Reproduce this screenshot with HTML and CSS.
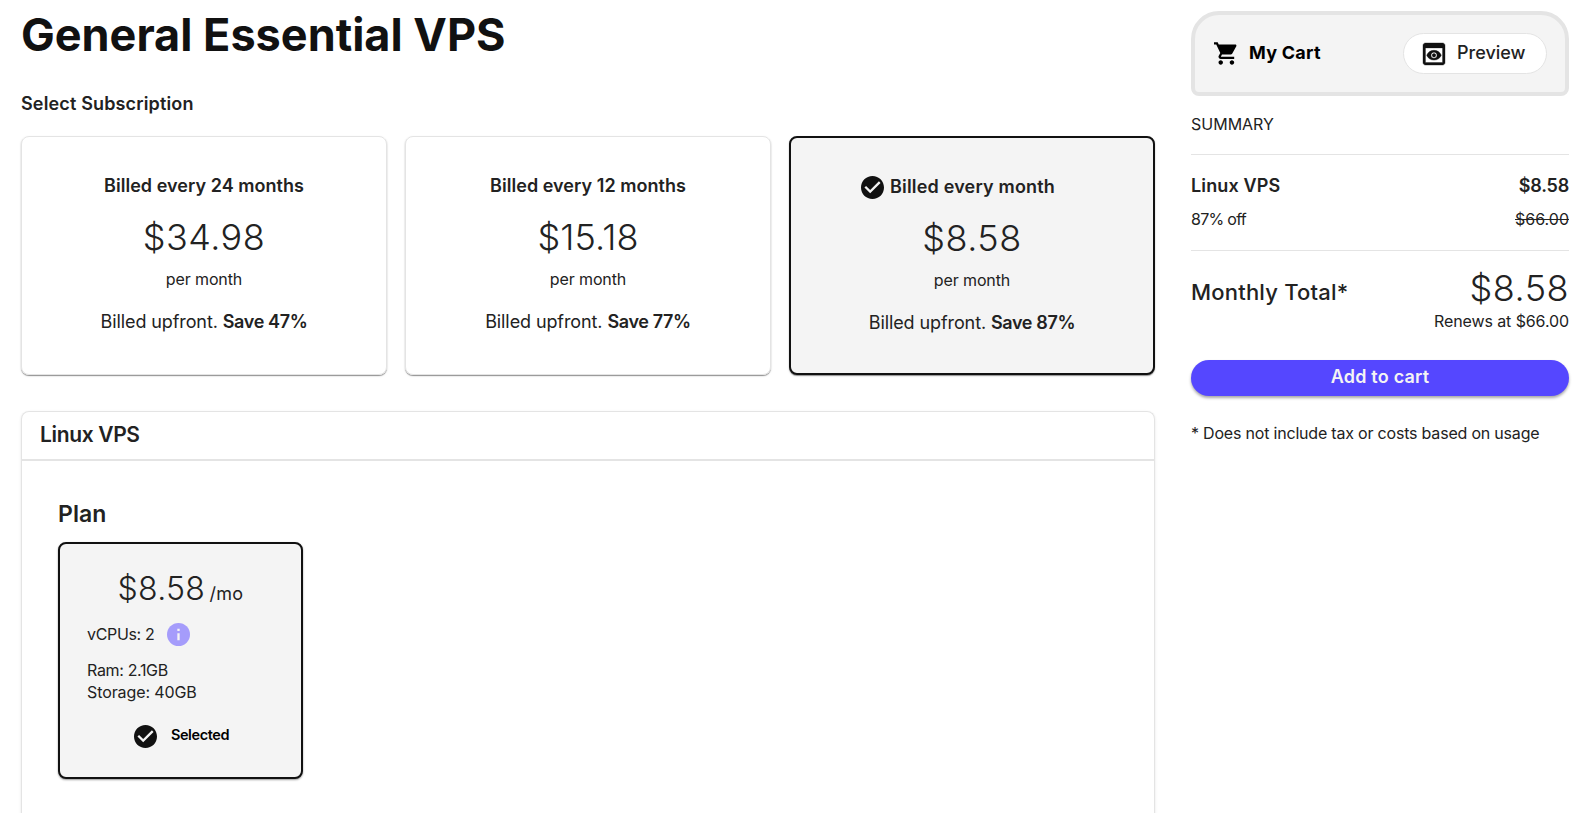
FILE: index.html
```
<!DOCTYPE html>
<html lang="en">
<head>
  <meta charset="UTF-8">
  <title>General Essential VPS</title>
  <link rel="stylesheet" href="styles.css">
</head>
<body>

<div class="page">
  <main class="main">
    <h1>General Essential VPS</h1>
    <h2 class="subtitle">Select Subscription</h2>

    <div class="cards">
      <div class="card">
        <div class="card-title">Billed every 24 months</div>
        <div class="price">$34.98</div>
        <div class="per">per month</div>
        <div class="upfront">Billed upfront. <b>Save 47%</b></div>
      </div>
      <div class="card">
        <div class="card-title">Billed every 12 months</div>
        <div class="price narrow">$15.18</div>
        <div class="per">per month</div>
        <div class="upfront">Billed upfront. <b>Save 77%</b></div>
      </div>
      <div class="card selected">
        <div class="card-title with-icon">
          <svg class="check" viewBox="2 2 20 20"><path fill="#111" d="M12 2C6.48 2 2 6.48 2 12s4.48 10 10 10 10-4.48 10-10S17.52 2 12 2zm-2 15l-5-5 1.41-1.41L10 14.17l7.59-7.59L19 8l-9 9z"/></svg>
          <span>Billed every month</span>
        </div>
        <div class="price">$8.58</div>
        <div class="per">per month</div>
        <div class="upfront">Billed upfront. <b>Save 87%</b></div>
      </div>
    </div>

    <section class="panel">
      <div class="panel-header">Linux VPS</div>
      <div class="panel-body">
        <h3>Plan</h3>
        <div class="plan selected">
          <div class="plan-price">$8.58 <span>/mo</span></div>
          <div class="cpu">
            <span>vCPUs: 2</span>
            <svg class="info" viewBox="2 2 20 20"><circle cx="12" cy="12" r="10" fill="#a59cfb"/><path fill="#f4f4f4" d="M11 7h2v2h-2zM11 11h2v6h-2z"/></svg>
          </div>
          <div class="spec">Ram: 2.1GB</div>
          <div class="spec storage">Storage: 40GB</div>
          <div class="chosen">
            <svg class="check" viewBox="2 2 20 20"><path fill="#111" d="M12 2C6.48 2 2 6.48 2 12s4.48 10 10 10 10-4.48 10-10S17.52 2 12 2zm-2 15l-5-5 1.41-1.41L10 14.17l7.59-7.59L19 8l-9 9z"/></svg>
            <span>Selected</span>
          </div>
        </div>
      </div>
    </section>
  </main>

  <aside class="side">
    <div class="cart">
      <svg class="cart-icon" viewBox="1 2 20.5 20"><path d="M7 18c-1.1 0-1.99.9-1.99 2S5.9 22 7 22s2-.9 2-2-.9-2-2-2zM1 2v2h2l3.6 7.59-1.35 2.45c-.16.28-.25.61-.25.96 0 1.1.9 2 2 2h12v-2H7.42c-.14 0-.25-.11-.25-.25l.03-.12.9-1.63h7.45c.75 0 1.41-.41 1.75-1.03l3.58-6.49c.08-.14.12-.31.12-.48 0-.55-.45-1-1-1H5.21l-.94-2H1zm16 16c-1.1 0-1.99.9-1.99 2s.89 2 1.99 2 2-.9 2-2-.9-2-2-2z"/></svg>
      <span class="cart-title">My Cart</span>
      <button class="preview">
        <svg class="preview-icon" viewBox="3 3 18 18"><path fill="#111" stroke="#111" stroke-width=".3" d="M19 3H5c-1.11 0-2 .9-2 2v14c0 1.1.89 2 2 2h14c1.1 0 2-.9 2-2V5c0-1.1-.9-2-2-2zm0 16H5V7h14v12zm-5.500-6c0 .83-.67 1.500-1.500 1.500s-1.500-.67-1.500-1.500.67-1.500 1.500-1.500 1.500.67 1.500 1.500zM12 9c-2.730 0-5.060 1.660-6 4 .94 2.340 3.270 4 6 4s5.060-1.660 6-4c-.94-2.340-3.270-4-6-4zm0 6.500c-1.380 0-2.500-1.120-2.500-2.500s1.120-2.500 2.500-2.500 2.500 1.120 2.500 2.500-1.120 2.500-2.500 2.500z"/></svg>
        <span>Preview</span>
      </button>
    </div>

    <div class="summary">SUMMARY</div>
    <div class="item">
      <div class="row strong"><span>Linux VPS</span><span class="amount">$8.58</span></div>
      <div class="row off"><span class="discount">87% off</span><s>$66.00</s></div>
    </div>
    <div class="total">
      <span class="total-label">Monthly Total*</span>
      <span class="price">$8.58</span>
    </div>
    <div class="renews">Renews at $66.00</div>
    <button class="add">Add to cart</button>
    <div class="note">* Does not include tax or costs based on usage</div>
  </aside>
</div>

</body>
</html>
```
FILE: styles.css
```
* { box-sizing: border-box; }
html, body { height: 100%; overflow: hidden; }
body { margin: 0; background: #fff; color: #222; font-family: Inter, "Liberation Sans", sans-serif; font-size: 16px; }
h1, h2, h3 { margin: 0; }
button { font-family: inherit; cursor: pointer; }
svg { flex: none; display: block; }

.page { display: flex; gap: 36px; padding: 8px 22px 0 21px; }
.main { width: 1134px; }
.side { width: 378px; padding-top: 3px; }

h1 { font-size: 45px; line-height: 54px; font-weight: 650; letter-spacing: 0; color: #111; }
.subtitle { margin-top: 30px; font-size: 18px; line-height: 24px; font-weight: 600; letter-spacing: 0.15px; }

/* billing cards */
.cards { display: grid; grid-template-columns: repeat(3, 366px); gap: 18px; margin-top: 20px; height: 239px; }
.card { padding-top: 37px; border: 1px solid #e4e4e4; border-radius: 8px; text-align: center; box-shadow: 0 1px 1px rgba(0,0,0,.4), 0 1px 3px rgba(0,0,0,.08); }
.selected { background: #f4f4f4; border: 2px solid #111; }
.card-title { display: flex; justify-content: center; height: 24px; font-size: 18px; line-height: 24px; font-weight: 600; letter-spacing: 0.04px; }
.with-icon { padding-right: 28px; letter-spacing: 0.19px; }
.check { width: 23px; height: 23px; margin: 1px 6px 0 0; }
.price { margin-top: 17px; font-size: 36px; line-height: 44px; font-weight: 300; letter-spacing: 0.5px; }
.narrow { letter-spacing: 0.1px; }
.per { margin-top: 10px; line-height: 20px; letter-spacing: -0.12px; }
.upfront { margin-top: 21px; font-size: 18px; line-height: 24px; letter-spacing: -0.1px; }
.upfront b { font-weight: 600; letter-spacing: -0.36px; }

/* product panel */
.panel { min-height: 402px; margin-top: 36px; border: 1px solid #e4e4e4; border-bottom: 0; border-radius: 8px 8px 0 0; box-shadow: 0 1px 3px rgba(0,0,0,.1); }
.panel-header { height: 49px; padding: 10px 0 0 18px; border-bottom: 2px solid #e4e4e4; font-size: 21px; line-height: 26px; font-weight: 600; letter-spacing: -0.35px; }
.panel-body { padding: 39px 36px; }
h3 { font-size: 23px; line-height: 28px; font-weight: 600; letter-spacing: 0.1px; }
.plan { width: 245px; height: 237px; margin-top: 14px; padding: 25px 27px 0; border-radius: 8px; box-shadow: 0 1px 2px rgba(0,0,0,.4); }
.plan-price { height: 40px; text-align: center; font-size: 32px; line-height: 40px; font-weight: 300; letter-spacing: 0.3px; word-spacing: -5px; }
.plan-price span { font-size: 18px; font-weight: 400; }
.cpu { display: flex; gap: 13px; margin: 14px 0 13px; height: 23px; line-height: 23px; letter-spacing: -0.34px; }
.info { width: 23px; height: 23px; }
.spec { line-height: 22px; letter-spacing: -0.34px; }
.storage { letter-spacing: -0.1px; }
.chosen { display: flex; justify-content: center; gap: 8px; margin: 21px 0 0 2px; color: #000; font-size: 14.5px; line-height: 22px; font-weight: 600; letter-spacing: -0.4px; }

/* cart */
.cart { display: flex; align-items: center; height: 85px; padding: 0 18px 0 19px; background: #f4f4f4; border: 4px solid #e4e4e4; border-radius: 28px 28px 8px 8px; color: #000; }
.cart-icon { width: 23px; height: 23px; }
.cart-title { margin-left: 12px; padding-bottom: 2px; font-size: 18px; font-weight: 650; letter-spacing: 0.25px; }
.preview { display: flex; align-items: center; gap: 12px; width: 144px; height: 41px; margin-left: auto; padding: 0 0 0 19px; background: #fff; border: 1px solid #e4e4e4; border-radius: 21px; color: #222; font-size: 18px; font-weight: 450; }
.preview span { padding-bottom: 2px; }
.preview-icon { width: 22px; height: 22px; overflow: visible; }

.summary { height: 59px; padding-top: 17px; border-bottom: 1px solid #e4e4e4; line-height: 22px; }
.item { height: 96px; padding-top: 19px; border-bottom: 1px solid #e4e4e4; }
.row { display: flex; justify-content: space-between; line-height: 24px; }
.strong { font-size: 18px; font-weight: 600; letter-spacing: 0.15px; }
.amount { letter-spacing: -0.2px; }
.off { margin-top: 9px; }
.discount { letter-spacing: -0.7px; }
.total { display: flex; justify-content: space-between; height: 44px; margin-top: 15px; line-height: 44px; }
.total .price { margin: 0; }
.total-label { padding-top: 4px; font-size: 22px; font-weight: 500; letter-spacing: 0.2px; }
.renews { text-align: right; line-height: 22px; letter-spacing: -0.1px; }
.add { display: block; width: 100%; height: 36px; margin-top: 28px; padding: 0 0 3px; background: #5547ff; border: 0; border-radius: 18px; color: #f4f4f4; font-size: 18px; font-weight: 600; letter-spacing: 0.2px; box-shadow: 0 2px 3px rgba(0,0,0,.35); }
.note { margin-top: 26px; line-height: 22px; letter-spacing: -0.2px; white-space: nowrap; }
```
